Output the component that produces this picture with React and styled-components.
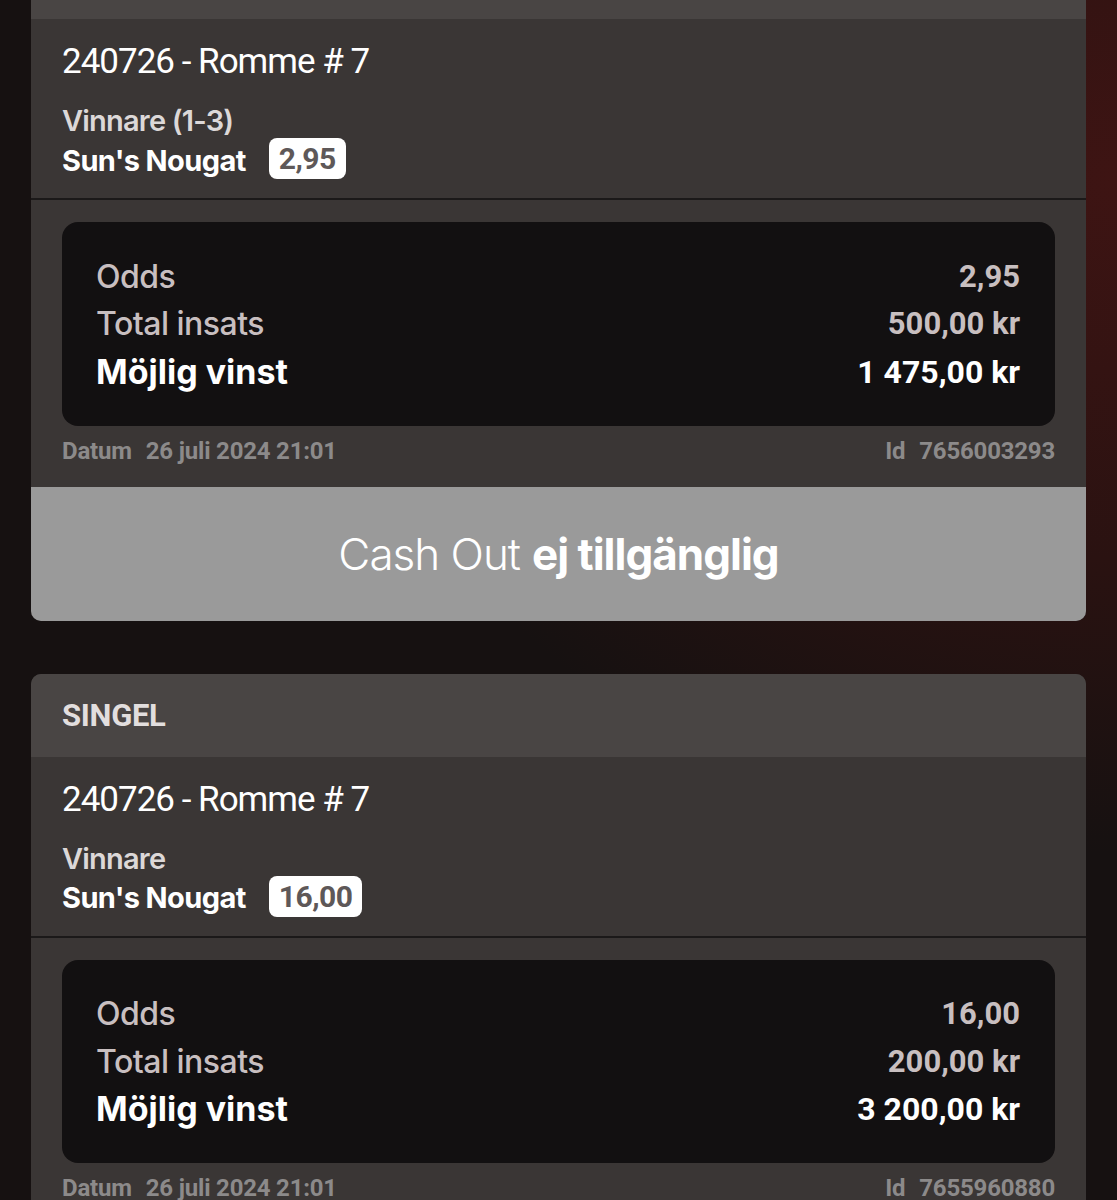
import styled, { createGlobalStyle } from "styled-components";

const GlobalStyle = createGlobalStyle`
  html, body {
    margin: 0;
    padding: 0;
  }
  body {
    min-height: 1200px;
    background: radial-gradient(ellipse 90% 70% at 100% 15%, #3e1413 0%, #2a1211 45%, #161111 80%), #161111;
    background-attachment: fixed;
    font-family: Roboto, "Liberation Sans", sans-serif;
    overflow: hidden;
  }
`;

const Page = styled.div`
  padding: 0 31px 60px;
  display: flex;
  flex-direction: column;
  gap: 53px;
`;

const Card = styled.div`
  background-color: #3a3635;
  border-radius: ${(props) => (props.$continued ? "0 0 10px 10px" : "10px")};
  overflow: hidden;
`;

const CardHeader = styled.div`
  height: ${(props) => (props.$continued ? "19px" : "83px")};
  display: flex;
  align-items: center;
  padding: 0 31px;
  background-color: #494544;
  color: #e2dede;
  font-size: 31px;
  font-weight: 700;
  letter-spacing: -0.3px;
`;

const CardBody = styled.div`
  display: flex;
  flex-direction: column;
  padding: 23px 31px 19px;
`;

const Title = styled.div`
  font-size: 35px;
  line-height: 40px;
  color: #ffffff;
  letter-spacing: -1px;
`;

const Market = styled.div`
  margin-top: 22px;
  font-family: Inter, Roboto, sans-serif;
  font-size: 29px;
  line-height: 34px;
  font-weight: 600;
  color: #dcd8d8;
  letter-spacing: -0.8px;
`;

const SelectionRow = styled.div`
  display: flex;
  align-items: center;
  height: 41px;
  gap: 23px;
`;

const Selection = styled.span`
  font-family: Inter, Roboto, sans-serif;
  font-size: 29px;
  font-weight: 700;
  color: #ffffff;
  letter-spacing: -0.6px;
  padding-top: 3px;
`;

const OddsBadge = styled.span`
  height: 41px;
  display: flex;
  align-items: center;
  padding: 0 10px;
  border-radius: 8px;
  background-color: #ffffff;
  color: #5e5858;
  font-size: 30px;
  font-weight: 700;
  letter-spacing: -0.5px;
`;

const Divider = styled.div`
  height: 2px;
  background-color: #1b1919;
`;

const Summary = styled.div`
  padding: 22px 31px 22px;
`;

const SummaryBox = styled.div`
  background-color: #121011;
  border-radius: 16px;
  padding: 31px 35px 30px 34px;
`;

const SummaryRow = styled.div`
  display: flex;
  justify-content: space-between;
  align-items: center;
  height: 47.5px;
  color: ${(props) => (props.$total ? "#ffffff" : "#c8bfc0")};
`;

const RowLabel = styled.span`
  font-family: Inter, Roboto, sans-serif;
  font-size: ${(props) => (props.$total ? "34px" : "32px")};
  line-height: 40px;
  font-weight: ${(props) => (props.$total ? 700 : 500)};
  letter-spacing: ${(props) => (props.$total ? "0" : "-0.5px")};
`;

const RowValue = styled.span`
  font-size: ${(props) => (props.$total ? "32px" : "31px")};
  line-height: 40px;
  font-weight: 700;
`;

const MetaRow = styled.div`
  display: flex;
  justify-content: space-between;
  margin-top: 11px;
  line-height: 28px;
  font-size: 24px;
  font-weight: 700;
  color: #8c8a8a;
  letter-spacing: -0.2px;
`;

const MetaItem = styled.span`
  display: flex;
  gap: 14px;
`;

const CashOut = styled.div`
  height: 134px;
  display: flex;
  align-items: center;
  justify-content: center;
  gap: 12px;
  background-color: #9a9a9a;
  color: #ffffff;
  font-family: Inter, Roboto, sans-serif;
  font-size: 44px;
  letter-spacing: -1px;
`;

const CashOutLight = styled.span`
  font-weight: 300;
`;

const CashOutBold = styled.span`
  font-weight: 700;
`;

const bets = [
  {
    id: "7656003293",
    market: "Vinnare (1-3)",
    odds: "2,95",
    stake: "500,00 kr",
    win: "1 475,00 kr",
    cashOut: true,
    continued: true,
  },
  {
    id: "7655960880",
    market: "Vinnare",
    odds: "16,00",
    stake: "200,00 kr",
    win: "3 200,00 kr",
    cashOut: false,
    continued: false,
  },
];

function BetCard({ bet }) {
  return (
    <Card $continued={bet.continued}>
      <CardHeader $continued={bet.continued}>
        {!bet.continued && "SINGEL"}
      </CardHeader>
      <CardBody>
        <Title>240726 - Romme # 7</Title>
        <Market>{bet.market}</Market>
        <SelectionRow>
          <Selection>Sun's Nougat</Selection>
          <OddsBadge>{bet.odds}</OddsBadge>
        </SelectionRow>
      </CardBody>
      <Divider />
      <Summary>
        <SummaryBox>
          <SummaryRow>
            <RowLabel>Odds</RowLabel>
            <RowValue>{bet.odds}</RowValue>
          </SummaryRow>
          <SummaryRow>
            <RowLabel>Total insats</RowLabel>
            <RowValue>{bet.stake}</RowValue>
          </SummaryRow>
          <SummaryRow $total>
            <RowLabel $total>Möjlig vinst</RowLabel>
            <RowValue $total>{bet.win}</RowValue>
          </SummaryRow>
        </SummaryBox>
        <MetaRow>
          <MetaItem>
            <span>Datum</span>
            <span>26 juli 2024 21:01</span>
          </MetaItem>
          <MetaItem>
            <span>Id</span>
            <span>{bet.id}</span>
          </MetaItem>
        </MetaRow>
      </Summary>
      {bet.cashOut && (
        <CashOut>
          <CashOutLight>Cash Out</CashOutLight>
          <CashOutBold>ej tillgänglig</CashOutBold>
        </CashOut>
      )}
    </Card>
  );
}

export default function App() {
  return (
    <>
      <GlobalStyle />
      <Page>
        {bets.map((bet) => (
          <BetCard key={bet.id} bet={bet} />
        ))}
      </Page>
    </>
  );
}
